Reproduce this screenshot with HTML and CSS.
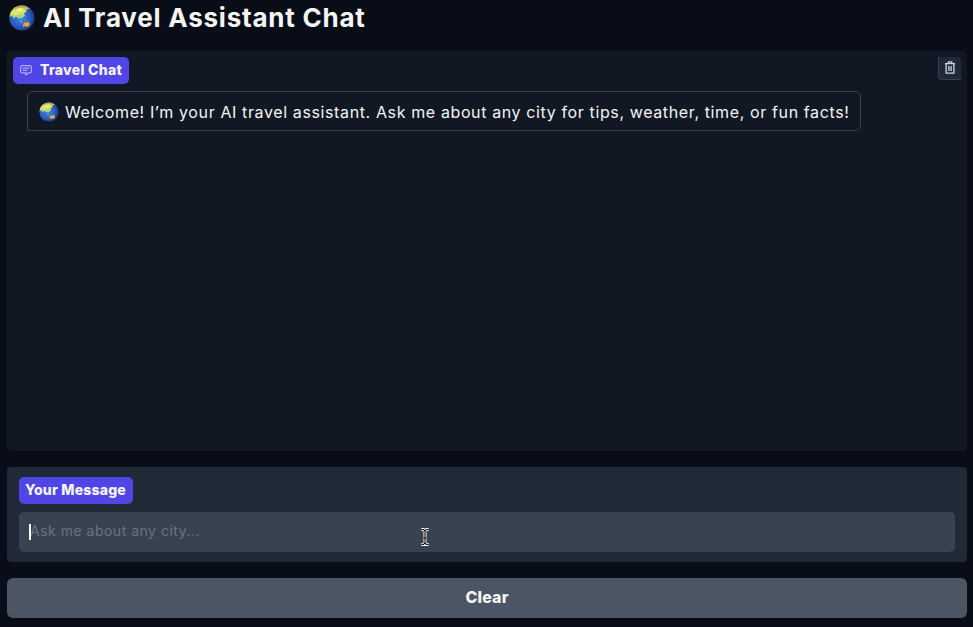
FILE: index.html
```html
<!DOCTYPE html>
<html lang="en">
<head>
<meta charset="utf-8">
<title>AI Travel Assistant Chat</title>
<link rel="stylesheet" href="styles.css">
</head>
<body>
<svg class="defs" aria-hidden="true">
  <defs>
    <radialGradient id="ocean" cx="42%" cy="46%" r="58%">
      <stop offset="0" stop-color="#3a86e0"/>
      <stop offset=".65" stop-color="#2a5cc6"/>
      <stop offset="1" stop-color="#20366f"/>
    </radialGradient>
    <linearGradient id="land" x1="0" y1="0" x2="0" y2="1">
      <stop offset="0" stop-color="#8f9658"/>
      <stop offset=".45" stop-color="#e8e45e"/>
      <stop offset="1" stop-color="#8cc79c"/>
    </linearGradient>
    <clipPath id="disc"><circle cx="13" cy="13" r="12.800"/></clipPath>
    <symbol id="globe" viewBox="0 0 26 26">
      <g clip-path="url(#disc)">
        <circle cx="13" cy="13" r="12.800" fill="url(#ocean)"/>
        <path d="M1 8 4 3 9 0h7l5 4-3 0-1 3-2 1 1 3-2 1-1 2-2-1-2 1-1-2-2 0-1 2-2-3-3 1z" fill="url(#land)"/>
        <path d="m7 4 5-1 3 1-2 2-5 1zM4 9l4-1 2 1-4 1z" fill="#f5ee83"/>
        <path d="m10 15 3 1 1 2-3-1zM16 13l1 2-1 1z" fill="#6eaeb0"/>
        <path d="m14 19 2-2 2 1 1-2 2 3-1 2-2 1-2-1-2 1z" fill="#d9a93a"/>
      </g>
    </symbol>
  </defs>
</svg>
<main class="app">
  <h1 class="title"><svg class="globe-lg"><use href="#globe"/></svg><span>AI Travel Assistant Chat</span></h1>
  <section class="chat">
    <header class="chat-head">
      <div class="tag">
        <svg class="tag-icon" viewBox="0 0 12 11"><path d="M1.500.7h9q.8 0 .8.8v5.600q0 .8-.8.8H7.800L6.100 10.300 5.400 9.700 6.500 7.900h-5Q.7 7.900.7 7.100V1.500Q.7.7 1.500.7zM2.600 3.100h6.800M2.600 5.300h4.600"/></svg>
        <span class="tag-text">Travel Chat</span>
      </div>
      <button class="trash" aria-label="Clear conversation">
        <svg viewBox="0 0 12 14"><path d="M1 2.700h10M4.300 2.400V.9h3.400v1.500M2.100 2.900v9.300h7.800V2.900M4.900 5v5M7.100 5v5"/></svg>
      </button>
    </header>
    <div class="bubble"><svg class="globe-sm"><use href="#globe"/></svg><span>Welcome! I’m your AI travel assistant. Ask me about any city for tips, weather, time, or fun facts!</span></div>
  </section>
  <section class="composer">
    <label class="tag tag-message"><span class="tag-text">Your Message</span></label>
    <div class="field"><span class="hint">Ask me about any city...</span><i class="caret"></i>
      <svg class="pointer" viewBox="0 0 10 18"><path class="halo" d="M1.500 1.500H3.500L5 3 6.500 1.500h2M5 3v12M3.500 10h3M1.500 16.500H3.500L5 15l1.500 1.500h2"/><path class="core" d="M1.500 1.500H3.500L5 3 6.500 1.500h2M5 3v12M3.500 10h3M1.500 16.500H3.500L5 15l1.500 1.500h2"/></svg>
    </div>
  </section>
  <button class="clear"><span>Clear</span></button>
</main>
</body>
</html>
```
FILE: styles.css
```css
* { box-sizing: border-box; }
body {
  margin: 0;
  height: 627px;
  overflow: hidden;
  background: #090d17;
  color: #f4f4f5;
  font-family: Inter, "Liberation Sans", sans-serif;
}
svg { display: block; flex: none; }
button { margin: 0; padding: 0; font: inherit; color: inherit; }
.defs { position: absolute; width: 0; height: 0; }
.app { display: flex; flex-direction: column; padding: 0 6px 0 7px; }
.title {
  display: flex;
  align-items: center;
  gap: 8px;
  height: 35px;
  margin: 0 0 16px;
  padding-left: 2px;
  font-size: 26px;
  line-height: 35px;
  font-weight: 700;
  letter-spacing: .78px;
  white-space: nowrap;
}
.globe-lg { width: 26px; height: 26px; }
.chat {
  height: 400px;
  margin-bottom: 16px;
  border-radius: 4px;
  background: #111824;
}
.chat-head { display: flex; justify-content: space-between; padding: 6px 6px 0; }
.tag {
  display: flex;
  align-items: center;
  gap: 8px;
  width: 116px;
  height: 27px;
  padding-left: 7px;
  border-radius: 5px;
  background: #5046e5;
  font-size: 14px;
  font-weight: 800;
  line-height: 25px;
  letter-spacing: .28px;
  white-space: nowrap;
}
.tag-text { height: 27px; }
.tag-icon { width: 12px; height: 11px; fill: none; stroke: #d2cff8; stroke-width: .9; }
.tag-message { width: 114px; padding-left: 6px; margin-bottom: 8px; letter-spacing: .2px; }
.trash {
  display: flex;
  align-items: center;
  justify-content: center;
  width: 23px;
  height: 23px;
  border: solid #374151;
  border-width: 0 0 1px 1px;
  border-radius: 0 4px 0 4px;
  background: #1f2937;
}
.trash svg { width: 12px; height: 14px; fill: none; stroke: #d4d6da; stroke-width: 1.300; }
.bubble {
  display: flex;
  align-items: center;
  gap: 6px;
  width: 834px;
  height: 40px;
  margin: 7px 0 0 20px;
  padding-left: 11px;
  border: 1px solid #374151;
  border-radius: 6px 6px 6px 0;
  font-size: 16px;
  white-space: nowrap;
}
.bubble span { letter-spacing: .62px; padding-top: 2px; }
.globe-sm { width: 20px; height: 20px; margin-top: 1px; }
.composer {
  height: 95px;
  margin-bottom: 16px;
  padding: 10px 12px;
  border-radius: 4px;
  background: #1f2937;
}
.field {
  position: relative;
  display: flex;
  align-items: center;
  height: 40px;
  padding-left: 11px;
  border-radius: 5px;
  background: #394250;
}
.hint { color: #6b7280; font-size: 14px; letter-spacing: .5px; line-height: 38px; margin-top: -2px; }
.caret { position: absolute; left: 10px; top: 12px; width: 2px; height: 16px; background: #fff; }
.pointer { position: absolute; left: 400.500px; top: 16px; width: 10px; height: 18px; fill: none; overflow: visible; }
.halo { stroke: #fff; stroke-width: 3; }
.core { stroke: #10141b; stroke-width: 1.200; }
.clear {
  height: 40px;
  padding-bottom: 2px;
  border: 0;
  border-radius: 6px;
  background: #4b5563;
  font-size: 16px;
  font-weight: 800;
  letter-spacing: .15px;
}
```
